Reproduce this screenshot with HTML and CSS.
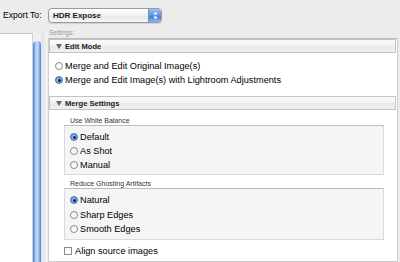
FILE: index.html
```html
<!DOCTYPE html>
<html lang="en">

<head>
    <meta charset="UTF-8">
    <link rel="stylesheet" href="styles.css">
</head>

<body>
    <div class="export-row">
        <span class="export-label">Export To:</span>
        <div class="popup">
            <span class="popup-text">HDR Expose</span>
            <span class="stepper">
                <svg width="5" height="9" viewBox="0 0 5 9">
                    <path d="M0.5 3.5 L2.5 0.5 L4.5 3.5 Z M0.5 5.5 L2.5 8.5 L4.5 5.5 Z" fill="#fff"/>
                </svg>
            </span>
        </div>
    </div>

    <div class="main">
        <div class="sidebar"></div>
        <div class="scroller">
            <div class="thumb"></div>
        </div>
        <div class="content">
            <div class="settings-label">Settings:</div>
            <div class="panels">
                <div class="section-head"><span class="tri"></span>Edit Mode</div>
                <div class="section-body">
                    <div class="radio"><span class="dot"></span>Merge and Edit Original Image(s)</div>
                    <div class="radio"><span class="dot on"></span>Merge and Edit Image(s) with Lightroom Adjustments</div>
                </div>

                <div class="section-head"><span class="tri"></span>Merge Settings</div>
                <div class="section-body merge">
                    <div class="group-label">Use White Balance</div>
                    <div class="group-box">
                        <div class="radio"><span class="dot on"></span>Default</div>
                        <div class="radio"><span class="dot"></span>As Shot</div>
                        <div class="radio"><span class="dot"></span>Manual</div>
                    </div>
                    <div class="group-label">Reduce Ghosting Artifacts</div>
                    <div class="group-box tall">
                        <div class="radio"><span class="dot on"></span>Natural</div>
                        <div class="radio"><span class="dot"></span>Sharp Edges</div>
                        <div class="radio"><span class="dot"></span>Smooth Edges</div>
                    </div>
                    <div class="check"><span class="box"></span>Align source images</div>
                </div>
            </div>
        </div>
    </div>
</body>

</html>
```

FILE: styles.css
```css
body {
    margin: 0;
    width: 400px;
    height: 262px;
    overflow: hidden;
    background-color: #ececec;
    font-family: 'Liberation Sans', Arial, sans-serif;
    color: #111;
}

/* top bar with the export popup */
.export-row {
    display: flex;
    align-items: center;
    height: 28px;
    padding-top: 2px;
    padding-left: 3px;
    box-sizing: border-box;
}

.export-label {
    width: 45px;
    font-size: 8.6px;
    color: #000;
}

.popup {
    display: flex;
    align-items: center;
    width: 114px;
    height: 15px;
    box-sizing: border-box;
    border: 1px solid #9a9a9a;
    border-radius: 4px;
    background: linear-gradient(#ffffff, #f1f1f1 50%, #e6e6e6 51%, #f7f7f7);
    box-shadow: 0 1px 1px rgba(0, 0, 0, 0.12);
}

.popup-text {
    flex: 1;
    padding-left: 4px;
    font-size: 8px;
    font-weight: bold;
    color: #222;
}

.stepper {
    display: flex;
    align-items: center;
    justify-content: center;
    width: 12px;
    height: 13px;
    border-radius: 0 3px 3px 0;
    background: linear-gradient(#9ec4f2, #5b93e0 50%, #3f7bd4 51%, #86b6f0);
    border-left: 1px solid #6f8fbf;
}

/* lower area */
.main {
    display: flex;
    height: 234px;
}

.sidebar {
    width: 32px;
    margin-top: 5px;
    background-color: #fff;
    border-top: 1px solid #c4c4c4;
}

.scroller {
    width: 16px;
    margin-top: 5px;
    box-sizing: border-box;
    border-left: 1px solid #cfcfcf;
    background: linear-gradient(to right, #f0f0f0, #f0f0f0 8px, #e2e2e2 8px, #eaeaea 12px, #f6f6f6 14px, #e4e4e4);
}

.thumb {
    width: 8px;
    height: 100%;
    margin-top: 8px;
    border-radius: 4px 4px 0 0;
    background: linear-gradient(to right, #4f82cc, #8fbaf0 25%, #cfe3fb 50%, #9cc3f3 70%, #4d80cc);
}

.content {
    display: flex;
    flex-direction: column;
    flex: 1;
    margin-right: 2px;
}

.settings-label {
    height: 10px;
    padding-left: 1px;
    font-size: 6.5px;
    line-height: 10px;
    color: #9a9a9a;
}

.panels {
    flex: 1;
    background-color: #fff;
    border: 1px solid #cfcfcf;
    border-top-color: #bdbdbd;
    border-bottom: 1px solid #c9c9c9;
}

.section-head {
    display: flex;
    align-items: center;
    height: 14px;
    margin-right: 1px;
    padding-left: 6px;
    box-sizing: border-box;
    border: 1px solid #c2c2c2;
    background: linear-gradient(#fbfbfb, #f2f2f2 50%, #e9e9e9 51%, #f0f0f0);
    font-size: 7.6px;
    font-weight: bold;
    color: #222;
}

.tri {
    width: 0;
    height: 0;
    margin-right: 3px;
    border-left: 3px solid transparent;
    border-right: 3px solid transparent;
    border-top: 5px solid #666;
}

.section-body {
    padding: 6px 0 9px 6px;
}

.section-body.merge {
    padding: 6px 0 0 15px;
}

.radio,
.check {
    display: flex;
    align-items: center;
    height: 14px;
    font-size: 9.2px;
    color: #000;
}

.dot {
    position: relative;
    width: 6px;
    height: 6px;
    margin-right: 2px;
    border: 1px solid #8a8a8a;
    border-radius: 50%;
    background: linear-gradient(#f4f4f4, #ffffff);
}

.dot.on {
    border-color: #4d6fa3;
    background: radial-gradient(circle at 50% 60%, #a8ccf6, #4c88dc);
}

.dot.on::after {
    content: "";
    position: absolute;
    top: 1.5px;
    left: 1.5px;
    width: 3px;
    height: 3px;
    border-radius: 50%;
    background-color: #10203a;
}

.group-label {
    height: 9px;
    padding-left: 6px;
    font-size: 7px;
    line-height: 9px;
    color: #333;
}

.group-box {
    width: 320px;
    margin-bottom: 4px;
    padding: 4px 0 2px 5px;
    box-sizing: border-box;
    background-color: #f5f5f5;
    border: 1px solid #dadada;
    border-top-color: #bcbcbc;
}

.group-box.tall {
    padding-top: 4px;
}

.group-box.tall .radio {
    height: 14.5px;
}

.box {
    width: 6px;
    height: 6px;
    margin-right: 3px;
    border: 1px solid #8a8a8a;
    background: linear-gradient(#f4f4f4, #ffffff);
}
```
